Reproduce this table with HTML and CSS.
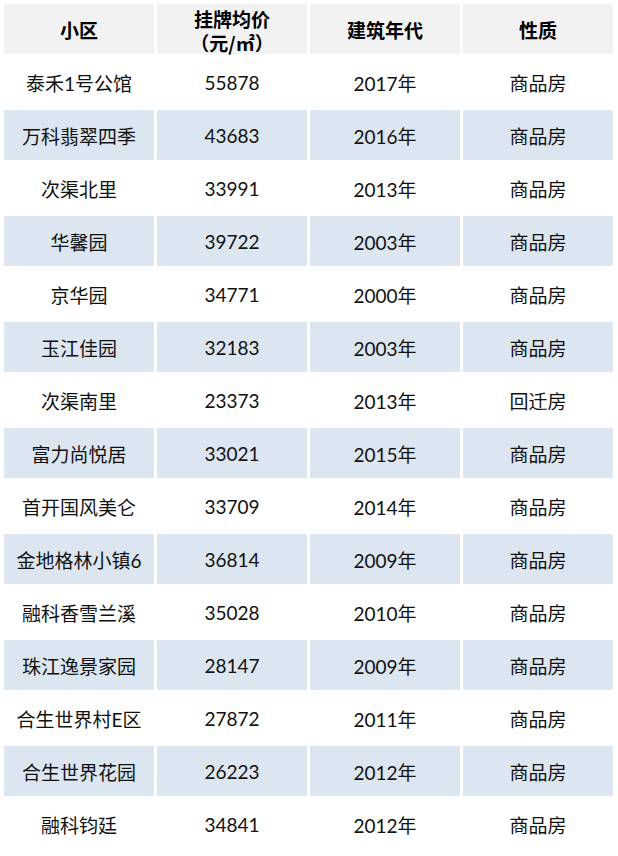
FILE: index.html
```html
<!DOCTYPE html>
<html lang="zh-CN">
<head>
<meta charset="utf-8">
<title>小区</title>
<link rel="stylesheet" href="styles.css">
</head>
<body>
<div class="table">
  <div class="cell head">小区</div>
  <div class="cell head two"><span>挂牌均价</span><span>（元/㎡）</span></div>
  <div class="cell head">建筑年代</div>
  <div class="cell head">性质</div>

  <div class="cell">泰禾1号公馆</div><div class="cell">55878</div><div class="cell">2017年</div><div class="cell">商品房</div>
  <div class="cell alt">万科翡翠四季</div><div class="cell alt">43683</div><div class="cell alt">2016年</div><div class="cell alt">商品房</div>
  <div class="cell">次渠北里</div><div class="cell">33991</div><div class="cell">2013年</div><div class="cell">商品房</div>
  <div class="cell alt">华馨园</div><div class="cell alt">39722</div><div class="cell alt">2003年</div><div class="cell alt">商品房</div>
  <div class="cell">京华园</div><div class="cell">34771</div><div class="cell">2000年</div><div class="cell">商品房</div>
  <div class="cell alt">玉江佳园</div><div class="cell alt">32183</div><div class="cell alt">2003年</div><div class="cell alt">商品房</div>
  <div class="cell">次渠南里</div><div class="cell">23373</div><div class="cell">2013年</div><div class="cell">回迁房</div>
  <div class="cell alt">富力尚悦居</div><div class="cell alt">33021</div><div class="cell alt">2015年</div><div class="cell alt">商品房</div>
  <div class="cell">首开国风美仑</div><div class="cell">33709</div><div class="cell">2014年</div><div class="cell">商品房</div>
  <div class="cell alt">金地格林小镇6</div><div class="cell alt">36814</div><div class="cell alt">2009年</div><div class="cell alt">商品房</div>
  <div class="cell">融科香雪兰溪</div><div class="cell">35028</div><div class="cell">2010年</div><div class="cell">商品房</div>
  <div class="cell alt">珠江逸景家园</div><div class="cell alt">28147</div><div class="cell alt">2009年</div><div class="cell alt">商品房</div>
  <div class="cell">合生世界村E区</div><div class="cell">27872</div><div class="cell">2011年</div><div class="cell">商品房</div>
  <div class="cell alt">合生世界花园</div><div class="cell alt">26223</div><div class="cell alt">2012年</div><div class="cell alt">商品房</div>
  <div class="cell">融科钧廷</div><div class="cell">34841</div><div class="cell">2012年</div><div class="cell">商品房</div>
</div>
</body>
</html>
```

FILE: styles.css
```css
html, body {
  margin: 0;
  padding: 0;
  background: #ffffff;
}

body {
  font-family: "Lato", "Noto Sans CJK SC", sans-serif;
  color: #111111;
}

.table {
  display: grid;
  grid-template-columns: repeat(4, 150px);
  grid-auto-rows: 50px;
  gap: 3px;
  padding: 4px;
}

.cell {
  display: flex;
  align-items: center;
  justify-content: center;
  font-size: 19px;
  background: #ffffff;
  white-space: nowrap;
}

.cell.alt {
  background: #dce6f1;
}

.cell.head {
  background: #f2f2f2;
  font-weight: bold;
  font-family: "Noto Sans CJK SC", sans-serif;
  color: #000000;
}

.cell.two {
  flex-direction: column;
  line-height: 24px;
  padding-top: 3px;
  box-sizing: border-box;
}

.cell.two span {
  display: block;
}
```
